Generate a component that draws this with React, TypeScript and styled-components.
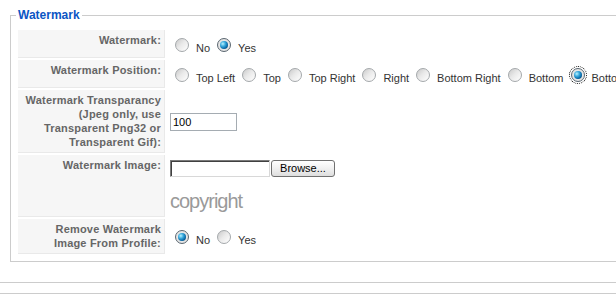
import React from "react";
import styled, { createGlobalStyle } from "styled-components";

const GlobalStyle = createGlobalStyle`
  html, body {
    margin: 0;
    padding: 0;
    background: #ffffff;
    overflow: hidden;
  }
  body {
    font-family: "Liberation Sans", Arial, Helvetica, sans-serif;
    font-size: 11px;
    color: #333;
  }
`;

const Page = styled.div`
  width: 616px;
  height: 299px;
  overflow: hidden;
`;

const Fieldset = styled.fieldset`
  margin: 8px 0 0 10px;
  padding: 5px;
  border: 1px solid #cccccc;
  width: 660px;
  min-width: 0;
  box-sizing: border-box;
`;

const Legend = styled.legend`
  padding: 0 2px;
  color: #0b55c4;
  font-family: "Liberation Sans", Arial, sans-serif;
  font-weight: bold;
  font-size: 12px;
  line-height: 15px;
`;

const FormGrid = styled.div`
  display: grid;
  grid-template-columns: 147px 1fr;
  grid-template-rows: 28px 28px 63px 62px 35px;
  gap: 2px;
  padding: 2px;
`;

const KeyCell = styled.div`
  box-sizing: border-box;
  background: #f6f6f6;
  border-bottom: 1px solid #e9e9e9;
  border-right: 1px solid #e9e9e9;
  padding: 3px;
  text-align: right;
  font-weight: bold;
  font-size: 11px;
  line-height: 14px;
  letter-spacing: 0.2px;
  color: #666666;
`;

const ValueCell = styled.div<{ $align?: "center" | "start" }>`
  box-sizing: border-box;
  padding: 3px;
  display: flex;
  flex-direction: column;
  justify-content: ${(p) => (p.$align === "start" ? "flex-start" : "center")};
  align-items: flex-start;
  white-space: nowrap;
`;

const RadioGroup = styled.div`
  display: flex;
  align-items: flex-end;
  white-space: nowrap;
`;

const Option = styled.label`
  display: flex;
  align-items: flex-end;
  margin-right: 2px;
`;

const Radio = styled.span<{ $checked?: boolean; $focused?: boolean }>`
  position: relative;
  display: block;
  box-sizing: border-box;
  width: 14px;
  height: 14px;
  margin: 4px 7px 3px 5px;
  border-radius: 50%;
  border: 1px solid ${(p) => (p.$checked ? "#5a6670" : "#a4a8ab")};
  background: ${(p) =>
    p.$checked
      ? "radial-gradient(circle at 50% 50%, #f4f4f4 0%, #e2e2e2 70%, #cfcfcf 100%)"
      : "linear-gradient(135deg, #c9c9c9 0%, #e9e9e9 45%, #ffffff 100%)"};
  outline: ${(p) => (p.$focused ? "1px dotted #000" : "none")};
  outline-offset: 1px;

  &::after {
    content: "";
    display: ${(p) => (p.$checked ? "block" : "none")};
    position: absolute;
    left: 2px;
    top: 2px;
    width: 8px;
    height: 8px;
    border-radius: 50%;
    background: radial-gradient(
      circle at 35% 35%,
      #b8f2ff 0%,
      #37a8dc 35%,
      #0a6aa8 65%,
      #06304f 100%
    );
  }
`;

const OptionText = styled.span`
  font-size: 11px;
  line-height: 13px;
  color: #333333;
`;

const TextInput = styled.input`
  box-sizing: border-box;
  width: 67px;
  height: 18px;
  margin: 0;
  padding: 0 2px;
  border: 1px solid #a5acb2;
  font-family: "Liberation Sans", Arial, sans-serif;
  font-size: 11px;
  color: #000;
  outline: none;
`;

const FileRow = styled.div`
  display: flex;
  align-items: center;
  margin-top: 2px;
`;

const FileBox = styled.span`
  box-sizing: border-box;
  width: 100px;
  height: 17px;
  border: 1px solid;
  border-color: #7a7a7a #d8d8d8 #d8d8d8 #7a7a7a;
  box-shadow: inset 1px 1px 0 #404040;
  background: #ffffff;
`;

const BrowseButton = styled.button`
  box-sizing: border-box;
  width: 64px;
  height: 17px;
  margin: 0 0 0 1px;
  padding: 0;
  border: 1px solid #707070;
  border-radius: 3px;
  background: linear-gradient(#ffffff 0%, #f2f2f2 45%, #dedede 100%);
  font-family: "Liberation Sans", Arial, sans-serif;
  font-size: 11px;
  line-height: 15px;
  color: #000;
`;

const Copyright = styled.div`
  margin-top: 12px;
  font-family: "Liberation Sans", Arial, sans-serif;
  font-size: 20px;
  line-height: 24px;
  letter-spacing: -1px;
  color: #9a9a9a;
`;

const Separator = styled.div`
  margin-top: 20px;
  height: 12px;
  box-sizing: border-box;
  border-top: 1px solid #cccccc;
  border-bottom: 1px solid #cccccc;
`;

type Opt = { label: string; checked?: boolean; focused?: boolean };

const Radios = ({ options }: { options: Opt[] }) => (
  <RadioGroup>
    {options.map((o) => (
      <Option key={o.label}>
        <Radio $checked={o.checked} $focused={o.focused} />
        <OptionText>{o.label}</OptionText>
      </Option>
    ))}
  </RadioGroup>
);

export default function App() {
  return (
    <Page>
      <GlobalStyle />
      <Fieldset>
        <Legend>Watermark</Legend>
        <FormGrid>
          <KeyCell>Watermark:</KeyCell>
          <ValueCell>
            <Radios options={[{ label: "No" }, { label: "Yes", checked: true }]} />
          </ValueCell>

          <KeyCell>Watermark Position:</KeyCell>
          <ValueCell>
            <Radios
              options={[
                { label: "Top Left" },
                { label: "Top" },
                { label: "Top Right" },
                { label: "Right" },
                { label: "Bottom Right" },
                { label: "Bottom" },
                { label: "Bottom Left", checked: true, focused: true },
              ]}
            />
          </ValueCell>

          <KeyCell>
            Watermark Transparancy
            <br />
            (Jpeg only, use
            <br />
            Transparent Png32 or
            <br />
            Transparent Gif):
          </KeyCell>
          <ValueCell>
            <TextInput type="text" defaultValue="100" />
          </ValueCell>

          <KeyCell>Watermark Image:</KeyCell>
          <ValueCell $align="start">
            <FileRow>
              <FileBox />
              <BrowseButton type="button">Browse...</BrowseButton>
            </FileRow>
            <Copyright>copyright</Copyright>
          </ValueCell>

          <KeyCell>
            Remove Watermark
            <br />
            Image From Profile:
          </KeyCell>
          <ValueCell>
            <Radios options={[{ label: "No", checked: true }, { label: "Yes" }]} />
          </ValueCell>
        </FormGrid>
      </Fieldset>
      <Separator />
    </Page>
  );
}
